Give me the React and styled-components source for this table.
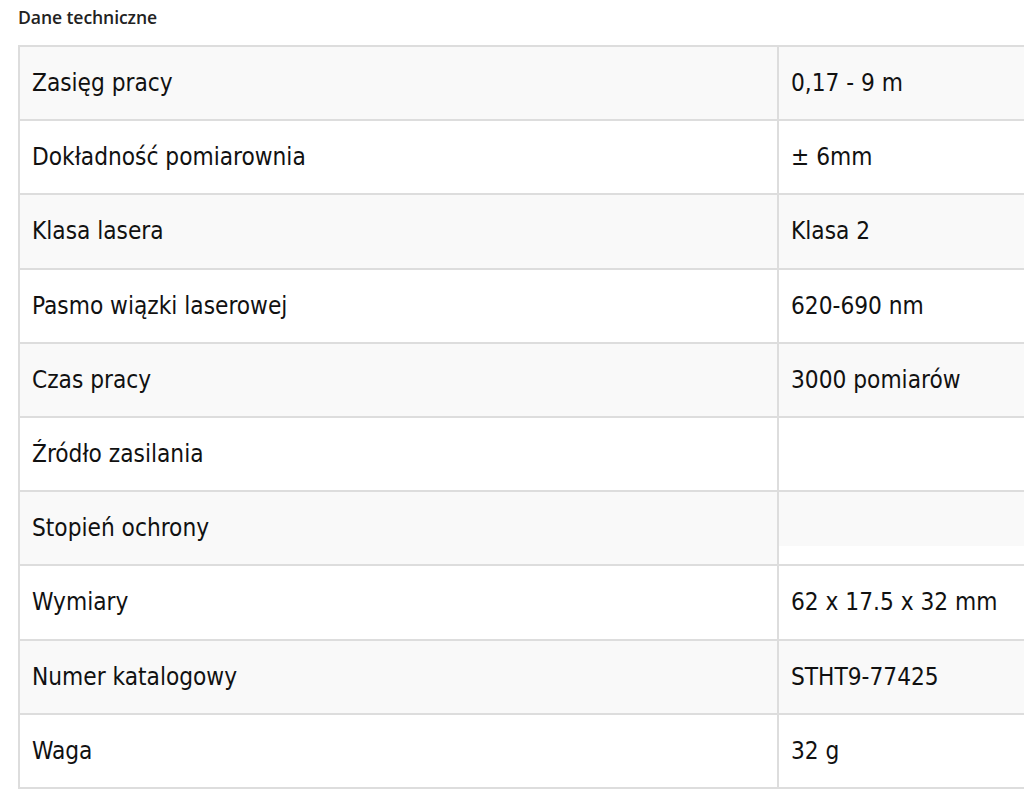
import React from 'react'
import styled, { createGlobalStyle } from 'styled-components'

const GlobalStyle = createGlobalStyle`
    html, body {
        margin: 0;
        padding: 0;
        background: #fff;
        overflow: hidden;
    }
`

const Page = styled.div`
    width: 1024px;
    height: 801px;
    padding: 0 0 0 18px;
    box-sizing: border-box;
    overflow: hidden;
`

const Title = styled.h3`
    margin: 0;
    height: 45px;
    padding-top: 5px;
    box-sizing: border-box;
    font-family: "Open Sans", sans-serif;
    font-weight: 600;
    font-size: 17.6px;
    letter-spacing: -0.1px;
    color: #222;
`

const Table = styled.div`
    width: 1040px;
    border-top: 2px solid #ddd;
    border-left: 2px solid #ddd;
`

const Row = styled.div`
    display: grid;
    grid-template-columns: 757px 1fr;
    height: 72.2px;
    border-bottom: 2px solid #ddd;
    background: ${p => (p.$odd ? '#f9f9f9' : '#fff')};
`

const Cell = styled.div`
    display: flex;
    align-items: center;
    padding: 0 12px;
    font-family: "DejaVu Sans Condensed", "DejaVu Sans", sans-serif;
    font-size: 24.2px;
    color: #111;
    & + & {
        border-left: 2px solid #ddd;
    }
`

const EmptyCell = styled.div`
    border-left: 2px solid #ddd;
    background: #fff;
`

const Filler = styled.div`
    height: 54px;
    background: ${p => (p.$odd ? '#f9f9f9' : '#fff')};
`

const specs = [
    ['Zasięg pracy', '0,17 - 9 m'],
    ['Dokładność pomiarownia', '± 6mm'],
    ['Klasa lasera', 'Klasa 2'],
    ['Pasmo wiązki laserowej', '620-690 nm'],
    ['Czas pracy', '3000 pomiarów'],
    ['Źródło zasilania', ''],
    ['Stopień ochrony', ''],
    ['Wymiary', '62 x 17.5 x 32 mm'],
    ['Numer katalogowy', 'STHT9-77425'],
    ['Waga', '32 g'],
]

export default function App() {
    return (
        <Page>
            <GlobalStyle />
            <Title>Dane techniczne</Title>
            <Table>
                {specs.map(([name, value], i) => {
                    const odd = i % 2 === 0
                    return (
                        <Row key={name} $odd={odd}>
                            <Cell>{name}</Cell>
                            {value ? (
                                <Cell>{value}</Cell>
                            ) : (
                                <EmptyCell>
                                    <Filler $odd={odd} />
                                </EmptyCell>
                            )}
                        </Row>
                    )
                })}
            </Table>
        </Page>
    )
}
